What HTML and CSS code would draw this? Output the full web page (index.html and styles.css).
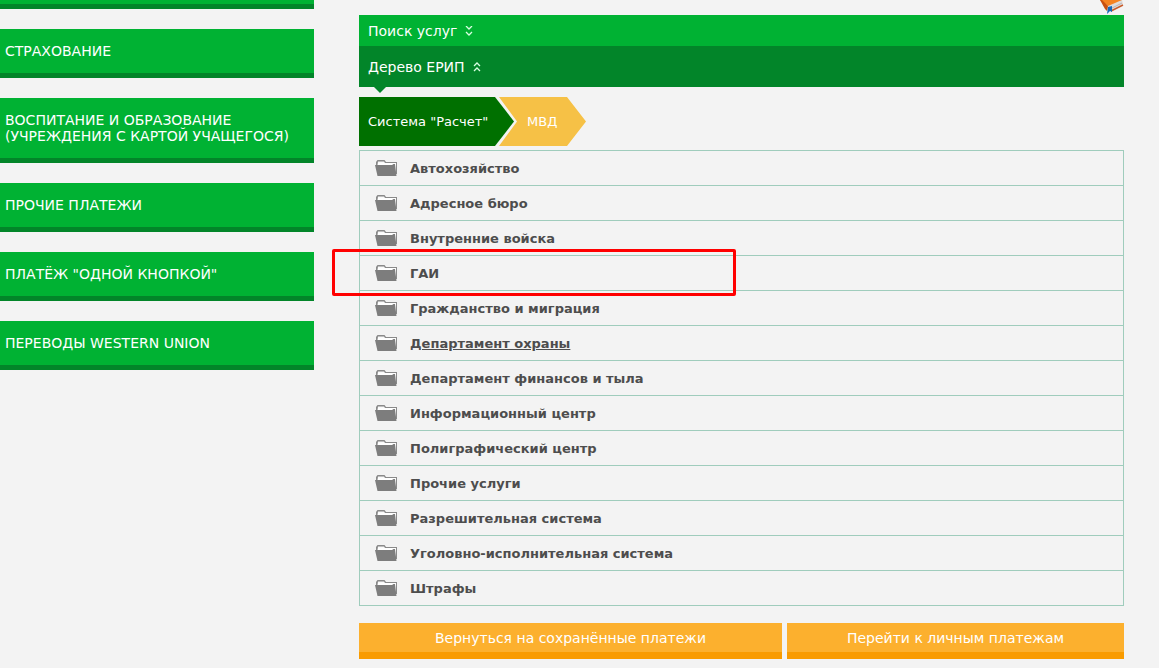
FILE: index.html
```html
<!DOCTYPE html>
<html lang="ru">
<head>
<meta charset="utf-8">
<title>Дерево ЕРИП</title>
<link rel="stylesheet" href="styles.css">
</head>
<body>
<svg class="sprite" aria-hidden="true">
  <symbol id="folder" viewBox="0 0 22 16">
    <path d="M1 4H3V2.500H21V14H3Z" fill="#fff"/>
    <path d="M1 5V2L2.500 0H9.500L11 2H22V14H21V3H10L9 1.500H3L2.500 5Z" fill="#8a8a8a"/>
    <path d="M0 5H17L18.500 4H20L21.500 16H2.500Z" fill="#7d7d7d"/>
  </symbol>
</svg>
<div class="page">
  <nav class="sidebar">
    <div class="side-end"></div>
    <a class="side-link" href="#">СТРАХОВАНИЕ</a>
    <a class="side-link" href="#">ВОСПИТАНИЕ И ОБРАЗОВАНИЕ (УЧРЕЖДЕНИЯ С КАРТОЙ УЧАЩЕГОСЯ)</a>
    <a class="side-link" href="#">ПРОЧИЕ ПЛАТЕЖИ</a>
    <a class="side-link" href="#">ПЛАТЁЖ "ОДНОЙ КНОПКОЙ"</a>
    <a class="side-link" href="#">ПЕРЕВОДЫ WESTERN UNION</a>
  </nav>
  <main class="content">
    <svg class="book" viewBox="0 0 24 14" aria-hidden="true">
      <path d="M2 0H22L23 4L12 11H7Z" fill="#dedbdb"/>
      <path d="M0 0H22L8 6Z" fill="#f58220"/>
      <path d="M0 0H2L8 6L7 11L5 9Z" fill="#c9500f"/>
      <path d="M11 11L23 5" stroke="#c85a2a" stroke-width="1.5"/>
      <path d="M12 8L22 3" stroke="#b9b3b3"/>
      <path d="M8 7L12 6V12L10 11L7 14Z" fill="#1769b8"/>
    </svg>
    <button class="bar bar-search" type="button">Поиск услуг
      <svg class="chevrons" viewBox="0 0 8 10"><path d="M1 0L4 3L7 0M1 6L4 9L7 6"/></svg>
    </button>
    <button class="bar bar-tree" type="button">Дерево ЕРИП
      <svg class="chevrons" viewBox="0 0 8 10"><path d="M1 4L4 1L7 4M1 9L4 6L7 9"/></svg>
    </button>
    <div class="crumbs">
      <a class="crumb crumb-root" href="#">Система "Расчет"</a>
      <a class="crumb crumb-current" href="#">МВД</a>
    </div>
    <ul class="tree">
      <li><svg class="folder"><use href="#folder"/></svg><a href="#">Автохозяйство</a></li>
      <li><svg class="folder"><use href="#folder"/></svg><a href="#">Адресное бюро</a></li>
      <li><svg class="folder"><use href="#folder"/></svg><a href="#">Внутренние войска</a></li>
      <li><svg class="folder"><use href="#folder"/></svg><a href="#">ГАИ</a><span class="highlight"></span></li>
      <li><svg class="folder"><use href="#folder"/></svg><a href="#">Гражданство и миграция</a></li>
      <li><svg class="folder"><use href="#folder"/></svg><a class="hovered" href="#">Департамент охраны</a></li>
      <li><svg class="folder"><use href="#folder"/></svg><a href="#">Департамент финансов и тыла</a></li>
      <li><svg class="folder"><use href="#folder"/></svg><a href="#">Информационный центр</a></li>
      <li><svg class="folder"><use href="#folder"/></svg><a href="#">Полиграфический центр</a></li>
      <li><svg class="folder"><use href="#folder"/></svg><a href="#">Прочие услуги</a></li>
      <li><svg class="folder"><use href="#folder"/></svg><a href="#">Разрешительная система</a></li>
      <li><svg class="folder"><use href="#folder"/></svg><a href="#">Уголовно-исполнительная система</a></li>
      <li><svg class="folder"><use href="#folder"/></svg><a href="#">Штрафы</a></li>
    </ul>
    <div class="actions">
      <button class="action action-saved" type="button">Вернуться на сохранённые платежи</button>
      <button class="action action-personal" type="button">Перейти к личным платежам</button>
    </div>
  </main>
</div>
</body>
</html>
```
FILE: styles.css
```css
* { box-sizing: border-box; }
body {
  margin: 0;
  background: #f3f3f3;
  font: 14px/16px Verdana, "DejaVu Sans", sans-serif;
}
a { color: inherit; text-decoration: none; }
button { font: inherit; color: #fff; border: 0; border-radius: 0; cursor: pointer; }
.sprite { display: none; }
.page { display: flex; gap: 45px; padding-right: 35px; }

.sidebar { flex: 0 0 314px; display: flex; flex-direction: column; gap: 20px; }
.side-end, .side-link { background: #00b233; border-bottom: 5px solid #028529; }
.side-end { height: 9px; }
.side-link { padding: 14px 5px; color: #fff; }

.content {
  position: relative;
  flex: 1;
  min-width: 0;
  padding-top: 15px;
  display: flex;
  flex-direction: column;
}
.book { position: absolute; top: 0; right: 0; width: 24px; height: 14px; }
.bar { display: flex; align-items: center; gap: 8px; padding: 0 9px; text-align: left; }
.bar-search { height: 31px; background: #00b233; }
.bar-tree { position: relative; height: 41px; background: #028529; }
.bar-tree::after {
  content: "";
  position: absolute;
  top: 100%;
  left: 15px;
  border: 6px solid transparent;
  border-top-color: #028529;
  border-bottom: 0;
}
.chevrons { width: 8px; height: 10px; fill: none; stroke: #d8ffe2; stroke-width: 1.3; }

.crumbs { display: flex; margin: 10px 0 4px; font-size: 13px; color: #fff; }
.crumb { height: 49px; line-height: 49px; }
.crumb-root {
  width: 155px;
  padding-left: 9px;
  background: #007000;
  clip-path: polygon(0 0, 136px 0, 100% 50%, 136px 100%, 0 100%);
}
.crumb-current {
  width: 87px;
  margin-left: -15px;
  padding-left: 28px;
  background: #f6c146;
  clip-path: polygon(0 0, 68px 0, 100% 50%, 68px 100%, 0 100%, 18px 50%);
}

.tree {
  margin: 0;
  padding: 0;
  list-style: none;
  border: 1px solid #9fccbc;
  border-bottom: 0;
  font-size: 13px;
  line-height: 18px;
  font-weight: bold;
  color: #4d4d4d;
}
.tree li {
  position: relative;
  display: flex;
  align-items: flex-start;
  gap: 13px;
  height: 35px;
  padding: 9px 0 0 15px;
  border-bottom: 1px solid #9fccbc;
}
.folder { width: 22px; height: 16px; }
.hovered { text-decoration: underline; }
.highlight {
  position: absolute;
  top: -7px;
  left: -28px;
  width: 404px;
  height: 47px;
  border: 3px solid #f00;
  border-radius: 2px;
  z-index: 1;
  pointer-events: none;
}

.actions { display: flex; gap: 5px; margin: 17px 0 9px; }
.action { height: 36px; padding: 0; background: #fcb02e; border-bottom: 7px solid #f99b00; }
.action-saved { flex: 423 1 0; }
.action-personal { flex: 337 1 0; }
```
